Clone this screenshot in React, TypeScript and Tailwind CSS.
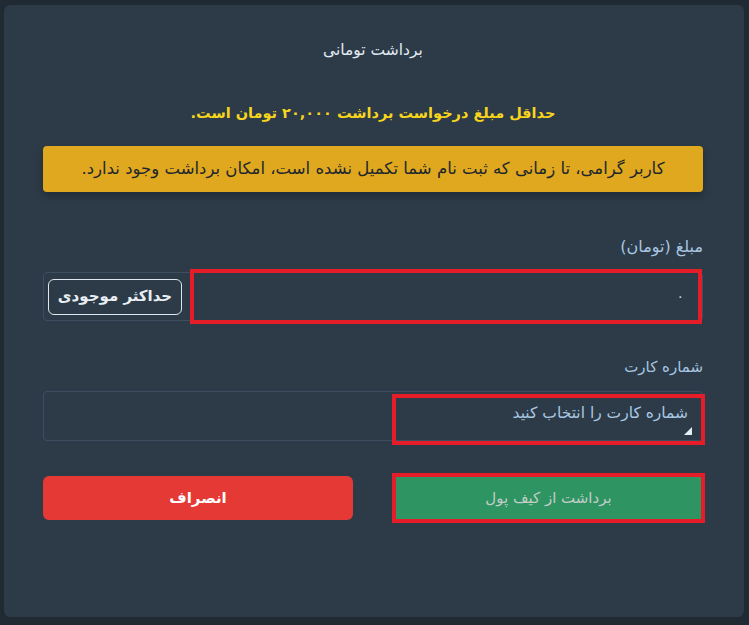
export default function App() {
  return (
    <div
      dir="rtl"
      className="min-h-[625px] w-[749px] bg-[#1f2a33] pl-[4px] pr-[5px] pt-[5px] pb-[8px]"
      style={{ fontFamily: '"DejaVu Sans", "Noto Sans", sans-serif' }}
    >
      <div className="h-[612px] rounded-md bg-[#2c3b47] pl-[39px] pr-[41px]">
        <h1 className="pt-[33px] text-center text-[15.5px] leading-6 text-[#e3ecf5]">برداشت تومانی</h1>

        <p className="mt-[39px] text-center text-[14.5px] font-bold leading-6 text-[#f7d51d]">
          حداقل مبلغ درخواست برداشت ۲۰,۰۰۰ تومان است.
        </p>

        <div className="mt-[21px] flex h-[46px] items-center justify-center rounded bg-[#dfa81e] text-[16.5px] text-[#1d262d] shadow-[0_4px_8px_rgba(0,0,0,0.25)]">
          کاربر گرامی، تا زمانی که ثبت نام شما تکمیل نشده است، امکان برداشت وجود ندارد.
        </div>

        <label className="mt-[43px] block text-[16px] leading-6 text-[#a9c6e2]">مبلغ (تومان)</label>
        <div className="relative mt-[13px] flex h-[49px] items-center rounded border border-[#3c4e60]">
          <div className="absolute -top-[4px] -bottom-[4px] right-[0px] left-[146px] border-4 border-[#e51d28]" />
          <div className="flex h-full flex-1 items-center">
            <span className="mr-[18px] text-[14px] text-[#c9d5e0]">۰</span>
          </div>
          <button className="ml-[4px] flex h-[36px] w-[134px] items-center justify-center rounded-md border border-[#dfe6ec] text-[15px] font-bold text-[#e8eef3]">
            حداکثر موجودی
          </button>
        </div>

        <label className="mt-[34px] block text-[15px] leading-6 text-[#a9c6e2]">شماره کارت</label>
        <div className="relative mt-[12px] h-[50px] rounded border border-[#3c4e60]">
          <div className="absolute -top-[-2px] -bottom-[5px] right-[-3px] left-[348px] border-4 border-[#e51d28]" />
          <span className="absolute right-[14px] top-[10px] text-[15.5px] text-[#a9c6e2]">شماره کارت را انتخاب کنید</span>
          <svg className="absolute right-[10px] bottom-[5px]" width="8" height="8" viewBox="0 0 8 8">
            <polygon points="8,0 8,8 0,8" fill="#e6edf3" />
          </svg>
        </div>

        <div className="mt-[32px] flex items-center justify-between">
          <div className="w-[313px] -mr-[2px] border-4 border-[#e51d28]">
            <button className="flex h-[42px] w-full items-center justify-center bg-[#2e9461] text-[15px] text-[#c2cdc9]">
              برداشت از کیف پول
            </button>
          </div>
          <button className="flex h-[44px] w-[310px] items-center justify-center rounded-md bg-[#e53935] text-[15px] font-bold text-white">
            انصراف
          </button>
        </div>
      </div>
    </div>
  );
}
